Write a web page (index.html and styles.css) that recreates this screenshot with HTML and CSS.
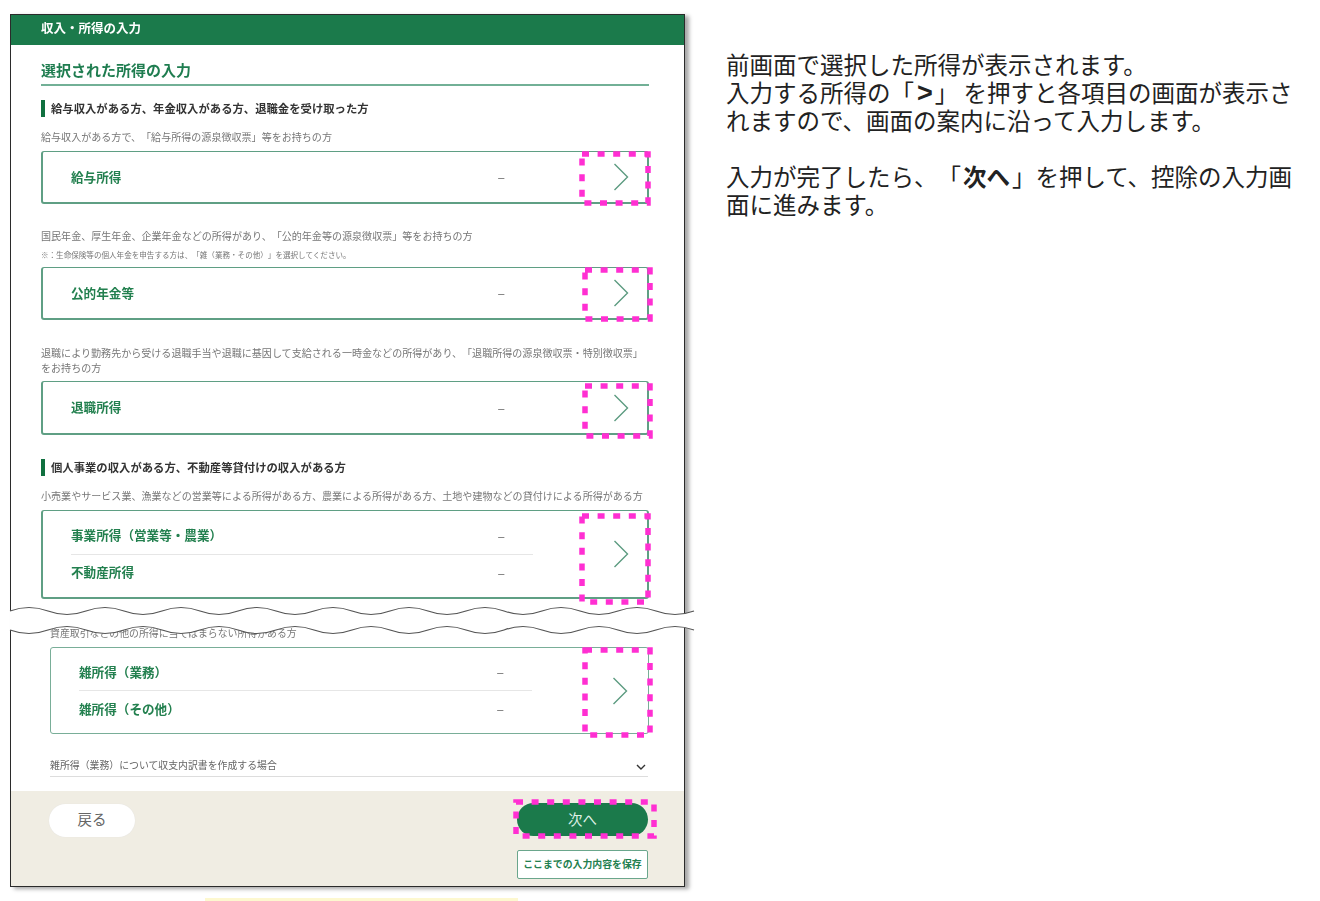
FILE: index.html
```html
<!DOCTYPE html>
<html lang="ja">
<head>
<meta charset="utf-8">
<title>収入・所得の入力</title>
<link rel="stylesheet" href="styles.css">
</head>
<body>
<div class="page">
  <div class="left">
    <div class="panel">
      <header class="bar">収入・所得の入力</header>
      <main class="content">
        <h1 class="title">選択された所得の入力</h1>
        <h2 class="sub sub-first">給与収入がある方、年金収入がある方、退職金を受け取った方</h2>
        <p class="desc desc-a">給与収入がある方で、「給与所得の源泉徴収票」等をお持ちの方</p>
        <div class="box">
          <div class="rows"><div class="row"><span class="label">給与所得</span><span class="dash">–</span></div></div>
          <div class="arrow"><svg width="16" height="28" viewBox="0 0 16 28"><path d="M1.5 1 L14.5 14 L1.5 27" class="chev"/></svg></div>
        </div>
        <p class="desc desc-b desc-tight">国民年金、厚生年金、企業年金などの所得があり、「公的年金等の源泉徴収票」等をお持ちの方</p>
        <p class="note">※：生命保険等の個人年金を申告する方は、「雑（業務・その他）」を選択してください。</p>
        <div class="box">
          <div class="rows"><div class="row"><span class="label">公的年金等</span><span class="dash">–</span></div></div>
          <div class="arrow"><svg width="16" height="28" viewBox="0 0 16 28"><path d="M1.5 1 L14.5 14 L1.5 27" class="chev"/></svg></div>
        </div>
        <p class="desc desc-b desc-c">退職により勤務先から受ける退職手当や退職に基因して支給される一時金などの所得があり、「退職所得の源泉徴収票・特別徴収票」<br>をお持ちの方</p>
        <div class="box box-tall">
          <div class="rows"><div class="row"><span class="label">退職所得</span><span class="dash">–</span></div></div>
          <div class="arrow"><svg width="16" height="28" viewBox="0 0 16 28"><path d="M1.5 1 L14.5 14 L1.5 27" class="chev"/></svg></div>
        </div>
        <h2 class="sub sub-second">個人事業の収入がある方、不動産等貸付けの収入がある方</h2>
        <p class="desc desc-a">小売業やサービス業、漁業などの営業等による所得がある方、農業による所得がある方、土地や建物などの貸付けによる所得がある方</p>
        <div class="box box-double">
          <div class="rows">
            <div class="row row-line"><span class="label">事業所得（営業等・農業）</span><span class="dash">–</span></div>
            <div class="row"><span class="label">不動産所得</span><span class="dash">–</span></div>
          </div>
          <div class="arrow"><svg width="16" height="28" viewBox="0 0 16 28"><path d="M1.5 1 L14.5 14 L1.5 27" class="chev"/></svg></div>
        </div>
        <div class="indent">
          <p class="desc desc-d">資産取引などの他の所得に当てはまらない所得がある方</p>
          <div class="box box-misc">
            <div class="rows rows-misc">
              <div class="row row-line"><span class="label">雑所得（業務）</span><span class="dash">–</span></div>
              <div class="row"><span class="label">雑所得（その他）</span><span class="dash">–</span></div>
            </div>
            <div class="arrow arrow-misc"><svg width="16" height="28" viewBox="0 0 16 28"><path d="M1.5 1 L14.5 14 L1.5 27" class="chev"/></svg></div>
          </div>
          <div class="accordion">
            <span>雑所得（業務）について収支内訳書を作成する場合</span>
            <svg width="10" height="7" viewBox="0 0 10 7"><path d="M1 1 L5 5 L9 1" class="mini"/></svg>
          </div>
        </div>
      </main>
      <footer class="foot">
        <button class="back">戻る</button>
        <div class="actions">
          <button class="next">次へ</button>
          <button class="save">ここまでの入力内容を保存</button>
        </div>
      </footer>
    </div>
    <div class="strip"></div>
  </div>
  <aside class="guide">
    <p>前画面で選択した所得が表示されます。<br>入力する所得の「<b class="gt">&gt;</b>」 を押すと各項目の画面が表示さ<br>れますので、画面の案内に沿って入力します。</p>
    <p class="guide-gap">入力が完了したら、「<b class="next-word">次へ</b>」を押して、控除の入力画<br>面に進みます。</p>
  </aside>
  <svg class="marks" width="1320" height="901" viewBox="0 0 1320 901">
    <path class="band" d="M10 611 q19 -7 38 0 q19 7 38 0 q19 -7 38 0 q19 7 38 0 q19 -7 38 0 q19 7 38 0 q19 -7 38 0 q19 7 38 0 q19 -7 38 0 q19 7 38 0 q19 -7 38 0 q19 7 38 0 q19 -7 38 0 q19 7 38 0 q19 -7 38 0 q19 7 38 0 q19 -7 38 0 q19 7 38 0 V630 q-19 -7 -38 0 q-19 7 -38 0 q-19 -7 -38 0 q-19 7 -38 0 q-19 -7 -38 0 q-19 7 -38 0 q-19 -7 -38 0 q-19 7 -38 0 q-19 -7 -38 0 q-19 7 -38 0 q-19 -7 -38 0 q-19 7 -38 0 q-19 -7 -38 0 q-19 7 -38 0 q-19 -7 -38 0 q-19 7 -38 0 q-19 -7 -38 0 q-19 7 -38 0 Z"/>
    <path class="wave" d="M10 611 q19 -7 38 0 q19 7 38 0 q19 -7 38 0 q19 7 38 0 q19 -7 38 0 q19 7 38 0 q19 -7 38 0 q19 7 38 0 q19 -7 38 0 q19 7 38 0 q19 -7 38 0 q19 7 38 0 q19 -7 38 0 q19 7 38 0 q19 -7 38 0 q19 7 38 0 q19 -7 38 0 q19 7 38 0"/>
    <path class="wave" d="M694 630 q-19 -7 -38 0 q-19 7 -38 0 q-19 -7 -38 0 q-19 7 -38 0 q-19 -7 -38 0 q-19 7 -38 0 q-19 -7 -38 0 q-19 7 -38 0 q-19 -7 -38 0 q-19 7 -38 0 q-19 -7 -38 0 q-19 7 -38 0 q-19 -7 -38 0 q-19 7 -38 0 q-19 -7 -38 0 q-19 7 -38 0 q-19 -7 -38 0 q-19 7 -38 0"/>
    <rect class="dots" x="582" y="154" width="66" height="49"/>
    <rect class="dots" x="585" y="270" width="65" height="49"/>
    <rect class="dots" x="585" y="386" width="65" height="50"/>
    <rect class="dots" x="582" y="516" width="66" height="86"/>
    <rect class="dots" x="585" y="650" width="65" height="85"/>
    <rect class="dots" x="516" y="802" width="138" height="34"/>
  </svg>
</div>
</body>
</html>
```
FILE: styles.css
```css
* { box-sizing: border-box; }
html, body { margin: 0; padding: 0; background: #fff; }
body { font-family: "Noto Sans CJK JP", "Noto Sans", sans-serif; overflow: hidden; text-spacing-trim: space-all; }
.page { position: relative; display: flex; width: 1320px; height: 901px; padding: 14px 0 0 10px; }
.left { width: 675px; flex: none; filter: blur(.3px); }
.panel { height: 873px; border: 1px solid #2b2b2b; background: #fff; box-shadow: 4px 2px 4px rgba(0,0,0,.35); display: flex; flex-direction: column; }
.bar { height: 30px; background: #1b7a4b; color: #fff; font-size: 12.5px; font-weight: 700; line-height: 26px; padding-left: 30px; }
.content { flex: 1; padding: 0 35px 0 30px; }
.title { margin: 0; padding: 15px 0 4px; border-bottom: 2px solid #72b096; font-size: 15px; line-height: 20px; font-weight: 700; color: #1f7d50; }
.sub { margin: 0; border-left: 4px solid #10703f; padding-left: 6px; font-size: 11.35px; line-height: 16px; height: 17px; font-weight: 700; color: #333; }
.sub-first { margin-top: 14px; }
.sub-second { margin-top: 24px; }
.desc { margin: 0; font-size: 10.05px; line-height: 15px; color: #777; white-space: nowrap; }
.desc-a { margin-top: 12px; margin-bottom: 7px; }
.desc-b { margin-top: 25px; }
.desc-tight { margin-top: 24px; }
.desc-c { margin-bottom: 6px; }
.desc-d { margin-top: 27px; margin-bottom: 6px; font-size: 9.88px; }
.note { margin: 6px 0 6px; font-size: 7.57px; line-height: 12px; color: #777; white-space: nowrap; }
.box { display: flex; height: 53px; border: 2px solid #5f9f84; border-top-width: 1.5px; border-radius: 3px; background: #fff; }
.box-tall { height: 54px; }
.box-double { height: 89px; padding: 7px 0; }
.box-misc { height: 87px; padding: 6px 0; border-width: 1.5px; border-color: #79ae98; }
.rows { width: 462px; margin-left: 28px; display: flex; flex-direction: column; justify-content: center; }
.rows-misc { width: 453px; }
.row { flex: none; height: 36px; display: flex; align-items: center; justify-content: space-between; padding-right: 28px; }
.row-line { height: 37px; border-bottom: 1px solid #e6e6e6; }
.label { font-size: 12.6px; line-height: 16px; margin-top: -1px; font-weight: 700; color: #23804f; }
.dash { font-size: 14px; line-height: 16px; margin-top: -2px; color: #777; }
.arrow { width: 52px; margin-left: auto; display: flex; align-items: center; justify-content: center; }
.arrow-misc { padding-right: 4px; }
.chev { fill: none; stroke: #5c9b80; stroke-width: 1.4; }
.indent { margin-left: 9px; }
.accordion { margin-top: 24px; width: 598px; height: 19px; border-bottom: 1px solid #ddd; display: flex; justify-content: space-between; align-items: flex-start; padding-right: 2px; font-size: 9.9px; line-height: 15px; color: #666; }
.accordion svg { margin-top: 6px; }
.mini { fill: none; stroke: #333; stroke-width: 1.4; }
.foot { height: 95px; background: #f0ede3; display: flex; justify-content: space-between; padding: 12px 36px 0 38px; }
.foot button { font-family: inherit; padding: 0 0 2px; }
.foot .back { width: 86px; height: 33px; margin-top: 1px; padding-bottom: 4px; border: 0; border-radius: 17px; background: #fff; color: #666; font-size: 14.5px; box-shadow: 0 0 1px #ddd; }
.actions { display: flex; flex-direction: column; gap: 14px; width: 131px; }
.next { height: 33px; border: 0; border-radius: 17px; background: #1b7a4b; color: #dff0e6; font-size: 14.5px; }
.save { height: 29px; border: 1px solid #6aa68c; border-radius: 2px; background: #fff; color: #23804f; font-size: 9.9px; font-weight: 700; white-space: nowrap; }
.strip { height: 3px; width: 313px; margin: 11px 0 0 195px; background: #fdf8cf; }
.guide { margin: 36px 0 0 41px; width: 590px; font-size: 23.5px; line-height: 28px; color: #222; }
.guide p { margin: 0; white-space: nowrap; }
.guide-gap { margin-top: 28px !important; }
.gt { font-family: "Liberation Sans", sans-serif; font-size: 27px; line-height: 0; margin: 0 2px 0 3px; }
.next-word { line-height: 0; margin: 0 2px; }
.marks { position: absolute; left: 0; top: 0; filter: blur(.3px); pointer-events: none; }
.band { fill: #fff; }
.wave { fill: none; stroke: #555; stroke-width: 1.2; }
.dots { fill: none; stroke: #ff2fd2; stroke-width: 5.5; stroke-dasharray: 7 8.6; }
```
